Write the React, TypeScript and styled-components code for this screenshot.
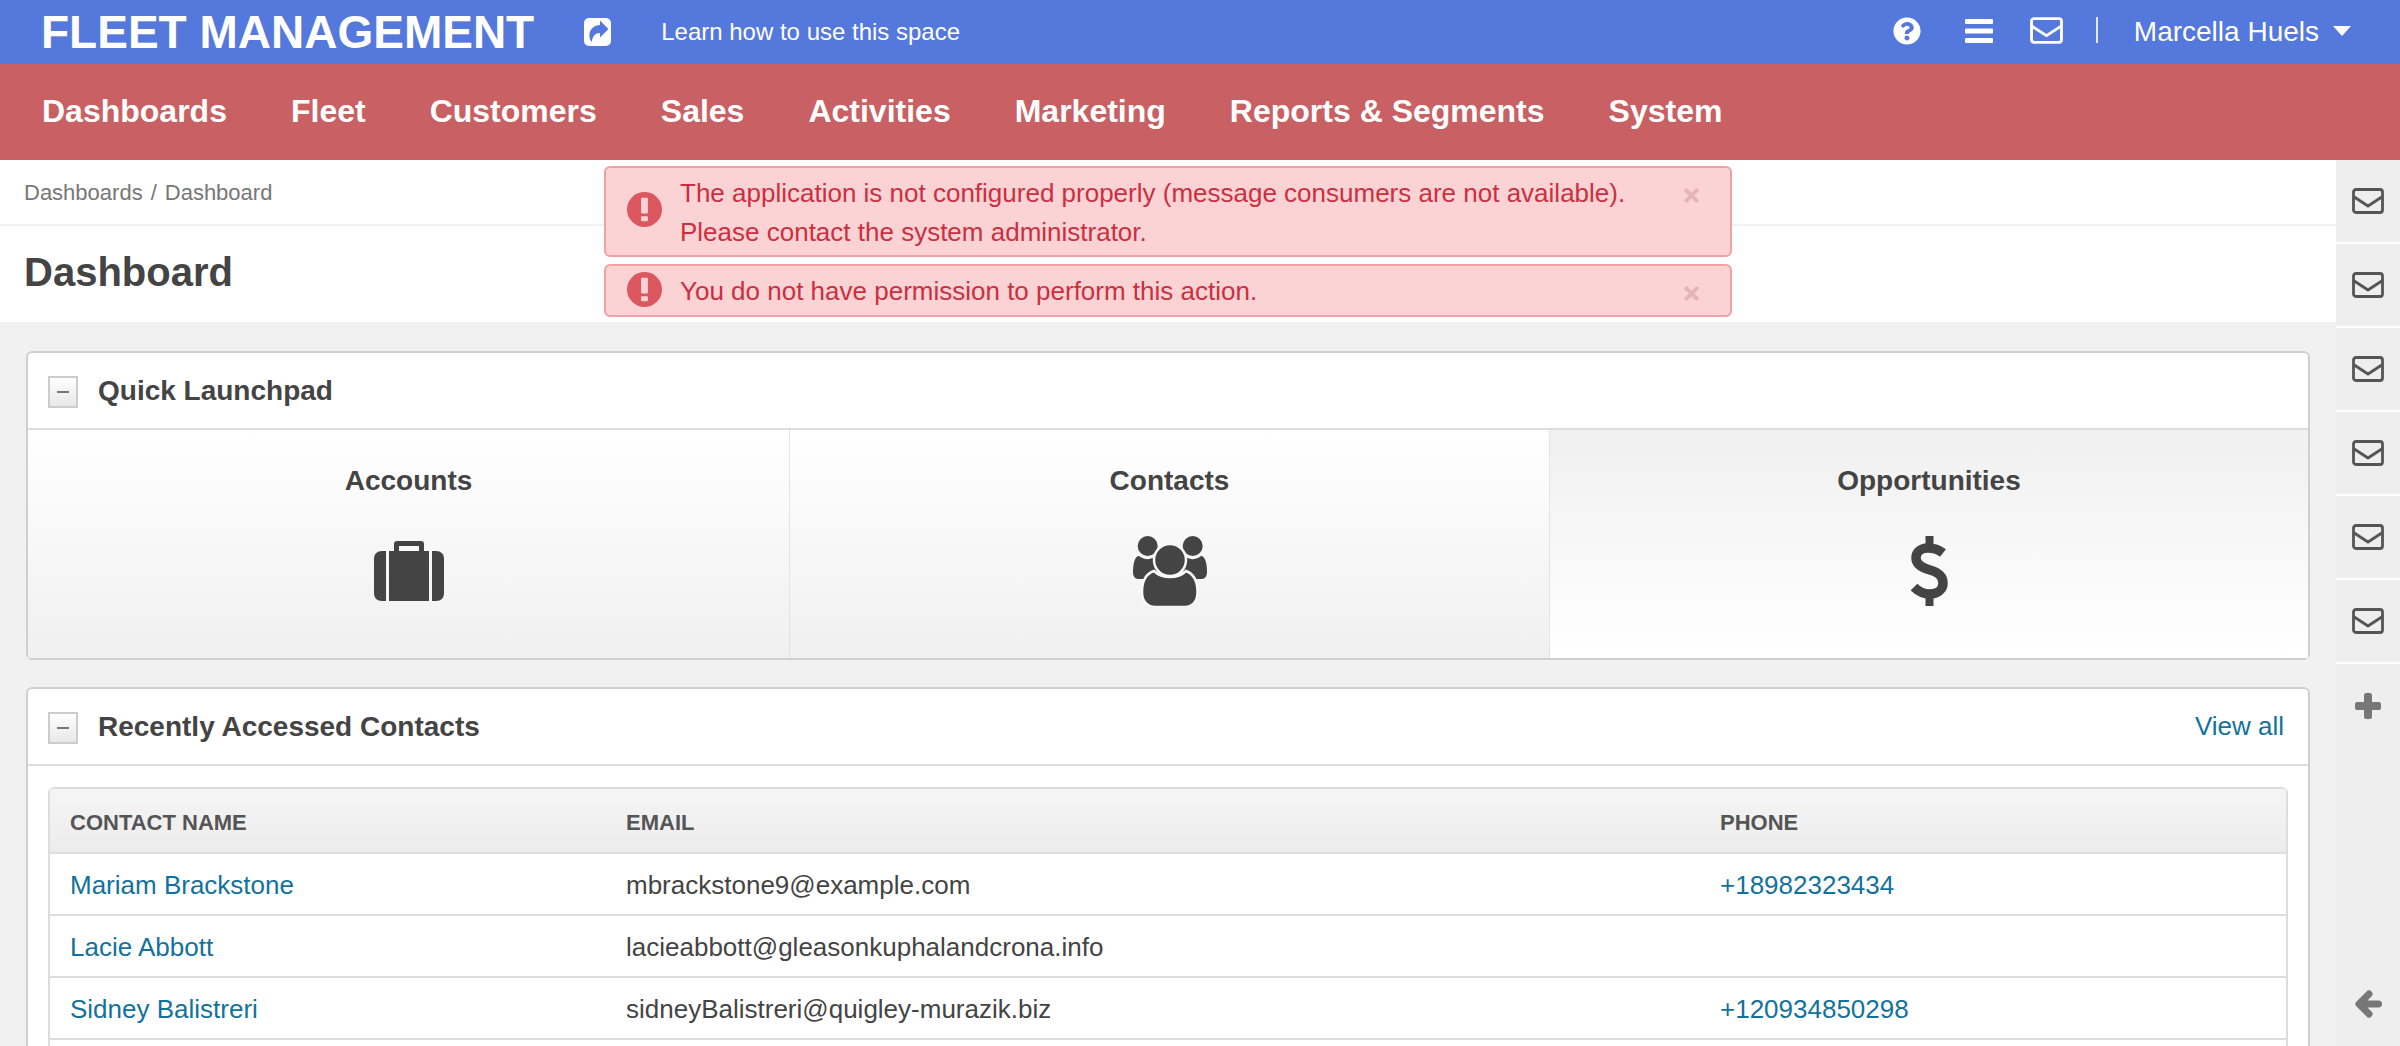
import React from "react";
import styled, { createGlobalStyle } from "styled-components";
import { FaQuestionCircle, FaTimes } from "react-icons/fa";

const GlobalStyle = createGlobalStyle`
    html, body {
        margin: 0;
        padding: 0;
        height: 100%;
        overflow: hidden;
        background: #f1f1f1;
        font-family: "Liberation Sans", Arial, sans-serif;
    }
    * {
        box-sizing: border-box;
    }
`;

const Page = styled.div`
    position: relative;
    height: 1046px;
    overflow: hidden;
    display: flex;
    flex-direction: column;
`;
const TopBar = styled.header`
    height: 64px;
    flex: none;
    display: flex;
    align-items: center;
    padding: 0 49px 0 41px;
    background: #5578dc;
    color: #fff;
`;
const Brand = styled.div`
    font-size: 46px;
    font-weight: 700;
    margin-right: 50px;
    white-space: nowrap;
`;
const ShareIcon = styled.svg`
    width: 27px;
    height: 28px;
    margin-right: 50px;
`;
const LearnLink = styled.a`
    font-size: 24px;
    color: #fff;
    flex: 1;
`;
const TopIcons = styled.div`
    display: flex;
    align-items: center;
    margin-bottom: 3px;
`;
const TopIcon = styled.span<{ $gap: number }>`
    display: flex;
    margin-right: ${(props) => props.$gap}px;
    font-size: 28px;
`;
const Divider = styled.span`
    width: 2px;
    height: 26px;
    background: #e6e6e6;
    margin: 0 36px 2px 0;
`;
const UserName = styled.span`
    font-size: 28px;
    white-space: nowrap;
`;
const Caret = styled.span`
    width: 0;
    height: 0;
    margin-left: 14px;
    margin-bottom: 3px;
    border-left: 9px solid transparent;
    border-right: 9px solid transparent;
    border-top: 10px solid #fff;
`;
const NavBar = styled.nav`
    height: 96px;
    flex: none;
    display: flex;
    align-items: center;
    gap: 64px;
    padding: 0 0 2px 42px;
    background: #c96164;
`;
const NavItem = styled.a`
    font-size: 32px;
    font-weight: 700;
    color: #fff;
    white-space: nowrap;
`;
const Body = styled.div`
    flex: 1;
    display: flex;
    min-height: 0;
`;
const Main = styled.main`
    flex: 1;
    min-width: 0;
`;
const Breadcrumbs = styled.div`
    height: 66px;
    padding: 2px 24px 0;
    display: flex;
    align-items: center;
    gap: 8px;
    background: #fff;
    border-bottom: 2px solid #f1f1f1;
    font-size: 22px;
    color: #777;
`;
const TitleBar = styled.div`
    height: 96px;
    padding: 0 24px 4px;
    display: flex;
    align-items: center;
    background: #fff;
`;
const PageTitle = styled.h1`
    margin: 0;
    font-size: 40px;
    font-weight: 700;
    color: #444;
`;
const Content = styled.div`
    padding: 29px 26px 0 26px;
`;
const Card = styled.section`
    background: #fff;
    border: 2px solid #cfcfcf;
    border-radius: 6px;
    margin-bottom: 27px;
`;
const CardHeader = styled.div`
    height: 77px;
    display: flex;
    align-items: center;
    padding: 0 24px 0 20px;
    border-bottom: 2px solid #ddd;
`;
const Toggle = styled.span`
    width: 30px;
    height: 32px;
    display: flex;
    align-items: center;
    justify-content: center;
    margin: 2px 20px 0 0;
    border: 2px solid #ccc;
    background: linear-gradient(#fff, #e8e8e8);
    &::before {
        content: "";
        width: 12px;
        height: 2px;
        background: #777;
    }
`;
const CardTitle = styled.h2`
    flex: 1;
    margin: 0;
    font-size: 28px;
    font-weight: 700;
    color: #444;
`;
const Link = styled.a`
    font-size: 26px;
    color: #13729c;
`;
const Tiles = styled.div`
    display: grid;
    grid-template-columns: 761px 760px 1fr;
`;
const Tile = styled.div<{ $active?: boolean }>`
    height: 228px;
    padding-top: 35px;
    display: flex;
    flex-direction: column;
    align-items: center;
    border-left: 1px solid #e4e4e4;
    color: #444;
    background: ${(props) =>
        props.$active ? "linear-gradient(#f0f0f0, #fff)" : "linear-gradient(#fff, #f0f0f0)"};
    &:first-child {
        border-left: 0;
    }
`;
const TileLabel = styled.div`
    font-size: 28px;
    font-weight: 700;
    line-height: 32px;
`;
const TileIcon = styled.div`
    height: 70px;
    margin-top: 39px;
    display: flex;
    align-items: center;
    justify-content: center;
`;
const TableWrap = styled.div`
    padding: 21px 20px 0;
`;
const Table = styled.table`
    width: 100%;
    border-collapse: separate;
    border-spacing: 0;
    table-layout: fixed;
    border: 2px solid #ddd;
    border-bottom: 0;
    border-radius: 6px 6px 0 0;
`;
const HeadCell = styled.th`
    height: 65px;
    padding: 5px 20px 0;
    text-align: left;
    font-size: 22px;
    font-weight: 700;
    text-transform: uppercase;
    color: #555;
    background: linear-gradient(#f5f5f5, #ececec);
    border-bottom: 2px solid #ddd;
`;
const Cell = styled.td`
    height: 62px;
    padding: 3px 20px 0;
    font-size: 26px;
    color: #444;
    border-bottom: 2px solid #ddd;
`;
const SideBar = styled.aside`
    width: 64px;
    flex: none;
    display: flex;
    flex-direction: column;
    background: #eee;
`;
const SideItem = styled.div`
    height: 84px;
    flex: none;
    display: flex;
    align-items: center;
    justify-content: center;
    border-bottom: 2px solid #fff;
    color: #555;
`;
const SideAction = styled.div<{ $push?: boolean }>`
    height: 84px;
    flex: none;
    display: flex;
    align-items: center;
    justify-content: center;
    margin-top: ${(props) => (props.$push ? "auto" : "0")};
    color: #777;
`;
const Alerts = styled.div`
    position: absolute;
    top: 166px;
    left: 604px;
    width: 1128px;
    display: flex;
    flex-direction: column;
    gap: 7px;
`;
const Alert = styled.div`
    position: relative;
    display: flex;
    align-items: flex-start;
    padding: 6px 60px 4px 21px;
    background: #fbd3d5;
    border: 2px solid #f0a1a5;
    border-radius: 6px;
    font-size: 26px;
    line-height: 38.5px;
    color: #cc2f3e;
`;
const AlertMark = styled.svg<{ $top: number }>`
    flex: none;
    width: 35px;
    height: 35px;
    margin: ${(props) => props.$top}px 18px 0 0;
`;
const CloseIcon = styled.span`
    position: absolute;
    top: 17px;
    right: 28px;
    display: flex;
    font-size: 21px;
    color: #e5b4b8;
`;

const navItems = [
    "Dashboards",
    "Fleet",
    "Customers",
    "Sales",
    "Activities",
    "Marketing",
    "Reports & Segments",
    "System",
];

const contacts = [
    { name: "Mariam Brackstone", email: "mbrackstone9@example.com", phone: "+18982323434" },
    { name: "Lacie Abbott", email: "lacieabbott@gleasonkuphalandcrona.info", phone: "" },
    { name: "Sidney Balistreri", email: "sidneyBalistreri@quigley-murazik.biz", phone: "+120934850298" },
    { name: "", email: "", phone: "" },
];

const Envelope: React.FC<{ width: number; height: number }> = ({ width, height }) => (
    <svg width={width} height={height} viewBox="0 0 32 26" fill="none" stroke="currentColor" strokeWidth="2.800">
        <rect x="1.500" y="1.500" width="29" height="23" rx="2.500" />
        <path d="M1.500 8.500 L16 18 L30.500 8.500" strokeLinejoin="round" />
    </svg>
);

const Bars = () => (
    <svg width="28" height="24" viewBox="0 0 28 24" fill="currentColor">
        <rect x="0" y="0" width="28" height="5" rx="1" />
        <rect x="0" y="9.500" width="28" height="5" rx="1" />
        <rect x="0" y="19" width="28" height="5" rx="1" />
    </svg>
);

const AlertIcon: React.FC<{ top: number }> = ({ top }) => (
    <AlertMark $top={top} viewBox="0 0 36 36">
        <circle cx="18" cy="18" r="18" fill="#dc585f" />
        <rect x="14.500" y="6" width="7" height="16" rx="1" fill="#fbd3d5" />
        <rect x="14.500" y="25" width="7" height="5" rx="1" fill="#fbd3d5" />
    </AlertMark>
);

const SuitcaseIcon = () => (
    <svg width="70" height="60" viewBox="0 0 70 60" fill="currentColor">
        <path d="M12 10 V60 H8 C3 60 0 57 0 52 V18 C0 13 3 10 8 10z" />
        <path d="M15 10 H20 V3 C20 1 21 0 23 0 H47 C49 0 50 1 50 3 V10 H55 V60 H15z M25 5 V10 H45 V5z" fillRule="evenodd" />
        <path d="M58 10 V60 H62 C67 60 70 57 70 52 V18 C70 13 67 10 62 10z" />
    </svg>
);

const PeopleIcon = () => (
    <svg width="76" height="70" viewBox="0 0 76 70" fill="currentColor">
        <circle cx="15.700" cy="10" r="10" />
        <circle cx="60.700" cy="10" r="10" />
        <path d="M1 36 C1 27 3 20 7 20 C12 24 18 24 22 21 C22 27 24 32 27 35 C22 36 18 39 16 43 H6 C3 43 1 40 1 36z" />
        <path d="M75 36 C75 27 73 20 69 20 C64 24 58 24 54 21 C54 27 52 32 49 35 C54 36 58 39 60 43 H70 C73 43 75 40 75 36z" />
        <circle cx="38" cy="24" r="16" stroke="#f8f8f8" strokeWidth="2.500" />
        <path
            d="M10 56 C10 45 13 38 22 35 C30 43 46 43 54 35 C62 38 65.500 45 65.500 56 C65.500 65 61 71 53 71 H23 C15 71 10 65 10 56z"
            stroke="#f8f8f8"
            strokeWidth="2.500"
        />
    </svg>
);

const DollarIcon = () => (
    <svg width="37" height="70" viewBox="0 0 37 70" fill="none" stroke="currentColor">
        <path d="M18.500 0 V12 M18.500 58 V70" strokeWidth="8" />
        <path
            d="M32 17 C27 13 22 12 17 12 C10 12 5 16 5 22 C5 29 12 32 19 34 C26 36 32 39 32 47 C32 54 26 58 19 58 C12 58 7 55 3 51"
            strokeWidth="9.500"
        />
    </svg>
);

const PlusIcon = () => (
    <svg width="26" height="26" viewBox="0 0 26 26" fill="currentColor">
        <path d="M9 2 C9 1 10 0 11 0 H15 C16 0 17 1 17 2 V9 H24 C25 9 26 10 26 11 V15 C26 16 25 17 24 17 H17 V24 C17 25 16 26 15 26 H11 C10 26 9 25 9 24 V17 H2 C1 17 0 16 0 15 V11 C0 10 1 9 2 9 H9z" />
    </svg>
);

const ArrowIcon = () => (
    <svg width="27" height="28" viewBox="0 0 27 28" fill="none" stroke="currentColor" strokeWidth="7" strokeLinecap="round" strokeLinejoin="round">
        <path d="M14 4 L4 14 L14 24 M5 14 H23.500" />
    </svg>
);

const App: React.FC = () => (
    <Page>
        <GlobalStyle />
        <TopBar>
            <Brand>FLEET MANAGEMENT</Brand>
            <ShareIcon viewBox="0 0 27 28">
                <rect x="0" y="0" width="27" height="28" rx="5" fill="#fff" />
                <path d="M16 2.500 L24.500 11 L16 19.500 V15 C11 15 9 18 7.500 24 C4 19 4 8 16 7z" fill="#5578dc" />
            </ShareIcon>
            <LearnLink>Learn how to use this space</LearnLink>
            <TopIcons>
                <TopIcon $gap={44}>
                    <FaQuestionCircle />
                </TopIcon>
                <TopIcon $gap={37}>
                    <Bars />
                </TopIcon>
                <TopIcon $gap={33}>
                    <Envelope width={33} height={27} />
                </TopIcon>
                <Divider />
            </TopIcons>
            <UserName>Marcella Huels</UserName>
            <Caret />
        </TopBar>
        <NavBar>
            {navItems.map((item) => (
                <NavItem key={item}>{item}</NavItem>
            ))}
        </NavBar>
        <Body>
            <Main>
                <Breadcrumbs>
                    <span>Dashboards</span>
                    <span>/</span>
                    <span>Dashboard</span>
                </Breadcrumbs>
                <TitleBar>
                    <PageTitle>Dashboard</PageTitle>
                </TitleBar>
                <Content>
                    <Card>
                        <CardHeader>
                            <Toggle />
                            <CardTitle>Quick Launchpad</CardTitle>
                        </CardHeader>
                        <Tiles>
                            <Tile>
                                <TileLabel>Accounts</TileLabel>
                                <TileIcon>
                                    <SuitcaseIcon />
                                </TileIcon>
                            </Tile>
                            <Tile>
                                <TileLabel>Contacts</TileLabel>
                                <TileIcon>
                                    <PeopleIcon />
                                </TileIcon>
                            </Tile>
                            <Tile $active>
                                <TileLabel>Opportunities</TileLabel>
                                <TileIcon>
                                    <DollarIcon />
                                </TileIcon>
                            </Tile>
                        </Tiles>
                    </Card>
                    <Card>
                        <CardHeader>
                            <Toggle />
                            <CardTitle>Recently Accessed Contacts</CardTitle>
                            <Link>View all</Link>
                        </CardHeader>
                        <TableWrap>
                            <Table>
                                <colgroup>
                                    <col style={{ width: 556 }} />
                                    <col style={{ width: 1094 }} />
                                    <col />
                                </colgroup>
                                <thead>
                                    <tr>
                                        <HeadCell>Contact name</HeadCell>
                                        <HeadCell>Email</HeadCell>
                                        <HeadCell>Phone</HeadCell>
                                    </tr>
                                </thead>
                                <tbody>
                                    {contacts.map((contact, i) => (
                                        <tr key={i}>
                                            <Cell>
                                                <Link>{contact.name}</Link>
                                            </Cell>
                                            <Cell>{contact.email}</Cell>
                                            <Cell>
                                                <Link>{contact.phone}</Link>
                                            </Cell>
                                        </tr>
                                    ))}
                                </tbody>
                            </Table>
                        </TableWrap>
                    </Card>
                </Content>
            </Main>
            <SideBar>
                {[0, 1, 2, 3, 4, 5].map((i) => (
                    <SideItem key={i}>
                        <Envelope width={32} height={26} />
                    </SideItem>
                ))}
                <SideAction>
                    <PlusIcon />
                </SideAction>
                <SideAction $push>
                    <ArrowIcon />
                </SideAction>
            </SideBar>
        </Body>
        <Alerts>
            <Alert>
                <AlertIcon top={18} />
                <div>
                    The application is not configured properly (message consumers are not available).
                    <br />
                    Please contact the system administrator.
                </div>
                <CloseIcon>
                    <FaTimes />
                </CloseIcon>
            </Alert>
            <Alert>
                <AlertIcon top={0} />
                <div>You do not have permission to perform this action.</div>
                <CloseIcon>
                    <FaTimes />
                </CloseIcon>
            </Alert>
        </Alerts>
    </Page>
);

export default App;
